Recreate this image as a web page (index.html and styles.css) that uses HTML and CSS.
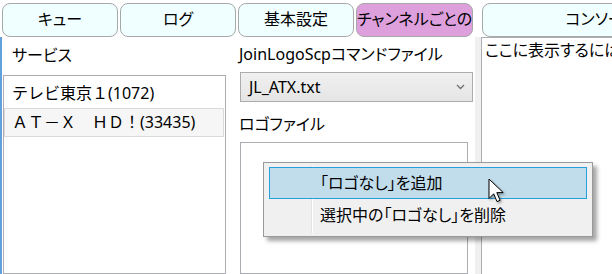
FILE: index.html
```html
<!DOCTYPE html>
<html>
<head>
    <title>チャンネルごとの設定</title>
    <link rel="stylesheet" href="styles.css">
</head>
<body>
    <div class="window">
        <div class="main">
            <div class="tabs">
                <div class="tab">キュー</div>
                <div class="tab">ログ</div>
                <div class="tab">基本設定</div>
                <div class="tab selected">チャンネルごとの</div>
            </div>
            <div class="content">
                <div class="services">
                    <div class="label">サービス</div>
                    <div class="listbox">
                        <div class="item">テレビ東京１(1072)</div>
                        <div class="item hover">ＡＴ－Ｘ　ＨＤ！(33435)</div>
                    </div>
                </div>
                <div class="settings">
                    <div class="label">JoinLogoScpコマンドファイル</div>
                    <div class="combo">
                        <span>JL_ATX.txt</span>
                        <svg class="chevron" width="9" height="6" viewBox="0 0 9 6">
                            <path d="M1 1 L4.5 4.5 L8 1" fill="none" stroke="#707070" stroke-width="1.3"/>
                        </svg>
                    </div>
                    <div class="label logo-label">ロゴファイル</div>
                    <div class="listbox logos"></div>
                </div>
            </div>
        </div>
        <div class="splitter"></div>
        <div class="console">
            <div class="tabs">
                <div class="tab console-tab">コンソール</div>
            </div>
            <div class="console-box">ここに表示するには</div>
        </div>
    </div>

    <div class="menu">
        <div class="gutter"></div>
        <div class="menu-item active">「ロゴなし」を追加</div>
        <div class="menu-item">選択中の「ロゴなし」を削除</div>
    </div>

    <svg class="cursor" width="20" height="28" viewBox="0 0 20 28">
        <defs>
            <filter id="shadow" x="-30%" y="-30%" width="160%" height="160%">
                <feDropShadow dx="1.5" dy="1.5" stdDeviation="1" flood-color="#000" flood-opacity="0.35"/>
            </filter>
        </defs>
        <path d="M1 1 L1 20.5 L5.7 15.8 L9 23.6 L12.1 22.3 L8.8 14.6 L15.2 14.6 Z"
              fill="#fff" stroke="#000" stroke-width="1" stroke-linejoin="miter" filter="url(#shadow)"/>
    </svg>
</body>
</html>
```

FILE: styles.css
```css
html, body {
    margin: 0;
    padding: 0;
    height: 100%;
    overflow: hidden;
}
body {
    font-family: "Noto Sans", "Noto Sans CJK JP", sans-serif;
    font-size: 16px;
    font-feature-settings: "palt";
    color: #000;
    background: #fff;
}
.window {
    display: flex;
    height: 100%;
}
.main {
    width: 474px;
    flex-shrink: 0;
    display: flex;
    flex-direction: column;
}
.tabs {
    display: flex;
    gap: 2px;
    padding: 3px 0 0 2px;
    height: 34px;
    flex-shrink: 0;
}
.tab {
    box-sizing: border-box;
    width: 116px;
    height: 34px;
    border: 1px solid #a8a8a8;
    border-radius: 8px;
    background: #f0ffff;
    text-align: center;
    line-height: 31px;
    white-space: nowrap;
    overflow: hidden;
}
.tab.selected {
    background: #dda0dd;
    width: 117px;
}
.content {
    flex: 1;
    display: flex;
    border-left: 2px solid #62a0dc;
    min-height: 0;
}
.label {
    line-height: 24px;
    white-space: nowrap;
}
.services {
    width: 223px;
    margin-left: 1px;
    padding-top: 6px;
    display: flex;
    flex-direction: column;
}
.services .label {
    padding-left: 9px;
    margin-bottom: 8px;
}
.listbox {
    flex: 1;
    border: 1px solid #abadb3;
    background: #fff;
    padding-top: 3px;
}
.item {
    height: 27px;
    line-height: 27px;
    padding-left: 7px;
    margin-right: 1px;
    border: 1px solid transparent;
    white-space: nowrap;
    font-feature-settings: normal;
}
.item.hover {
    background: #f6f6f6;
    border-color: #dadada;
}
.settings {
    width: 233px;
    margin-left: 14px;
    padding-top: 5px;
    display: flex;
    flex-direction: column;
}
.settings .label {
    margin-left: -1px;
}
.combo {
    box-sizing: border-box;
    height: 30px;
    margin-top: 6px;
    border: 1px solid #acacac;
    background: linear-gradient(#f0f0f0, #e5e5e5);
    display: flex;
    align-items: center;
    justify-content: space-between;
    padding: 0 7px 0 8px;
}
.chevron {
    display: block;
}
.logo-label {
    margin-top: 10px;
}
.logos {
    margin-top: 6px;
    margin-right: 5px;
    padding-top: 0;
}
.splitter {
    width: 6px;
    flex-shrink: 0;
    margin-left: 1px;
    margin-top: 37px;
    background: #f0f0f0;
}
.console {
    flex: 1;
    display: flex;
    flex-direction: column;
    min-width: 0;
}
.console .tabs {
    padding-left: 1px;
}
.console-tab {
    width: 240px;
    flex-shrink: 0;
    border-radius: 8px 0 0 8px;
}
.console-box {
    flex: 1;
    border-top: 1px solid #abadb3;
    border-left: 1px solid #abadb3;
    padding: 1px 0 0 3px;
    line-height: 22px;
    white-space: nowrap;
    overflow: hidden;
}
.menu {
    position: absolute;
    left: 263px;
    top: 162px;
    width: 330px;
    box-sizing: border-box;
    padding: 4px 5px 5px 5px;
    background: #f0f0f0;
    border: 1px solid #999;
    box-shadow: 4px 4px 4px rgba(0, 0, 0, 0.35);
}
.gutter {
    position: absolute;
    left: 47px;
    top: 3px;
    bottom: 3px;
    width: 1px;
    background: #e2e2e2;
    border-right: 1px solid #fff;
}
.menu-item {
    position: relative;
    height: 30px;
    line-height: 30px;
    padding-left: 50px;
    border: 1px solid transparent;
    white-space: nowrap;
}
.menu-item.active {
    background: #c1ddeb;
    border-color: #26a0da;
}
.cursor {
    position: absolute;
    left: 488px;
    top: 178px;
}
```
